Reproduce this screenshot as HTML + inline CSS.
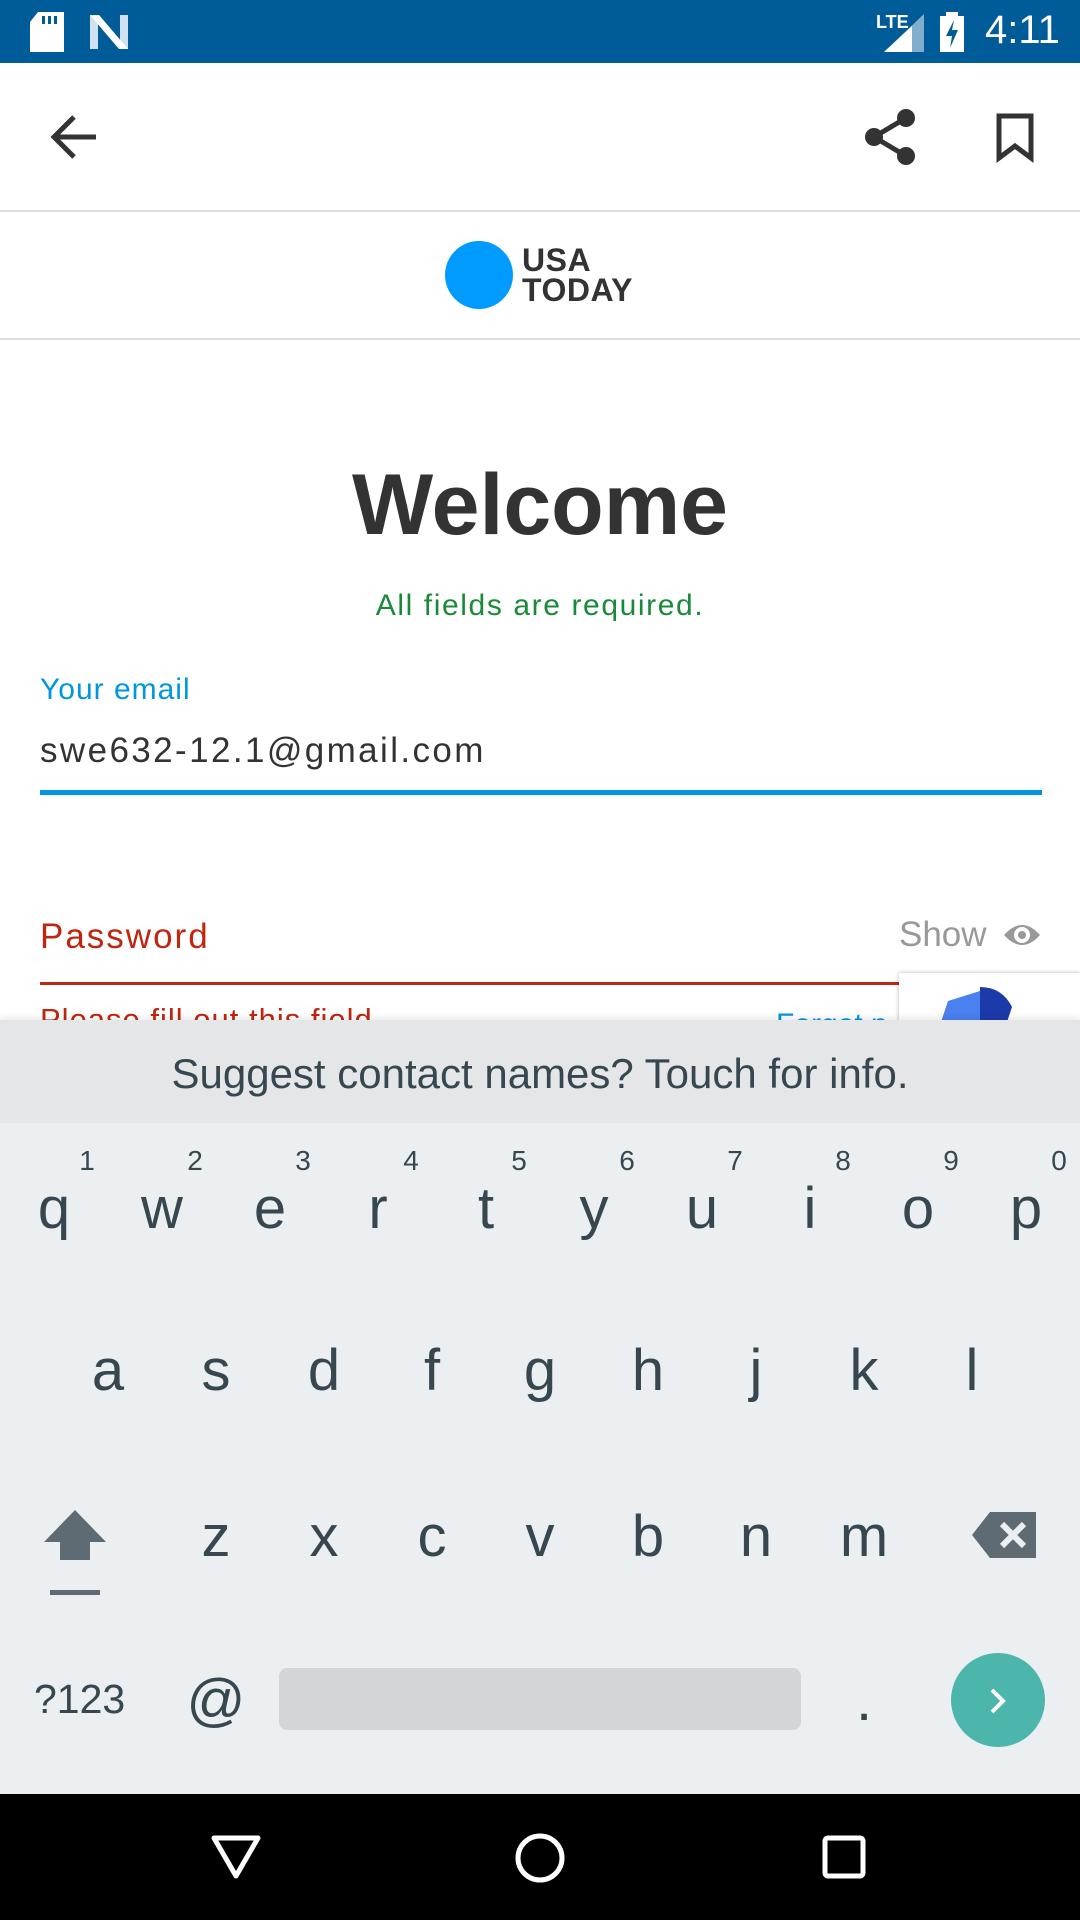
<!DOCTYPE html>
<html><head><meta charset="utf-8"><style>
*{margin:0;padding:0;box-sizing:border-box}
body{width:1080px;height:1920px;position:relative;overflow:hidden;background:#fff;font-family:"Liberation Sans",sans-serif}
.a{position:absolute}
.k{position:absolute;width:108px;text-align:center;font-size:58px;color:#37474f;line-height:1}
.n{position:absolute;width:40px;text-align:center;font-size:28px;color:#37474f}
</style></head><body>
<div class="a" style="left:0;top:0;width:1080px;height:63px;background:#005c99"></div>
<svg class="a" style="left:30px;top:12px" width="34" height="40"><path d="M8 0H34V40H0V10Z" fill="#fff"/><rect x="12" y="4" width="3" height="8" fill="#005c99"/><rect x="18" y="4" width="3" height="8" fill="#005c99"/><rect x="24" y="4" width="3" height="8" fill="#005c99"/></svg>
<svg class="a" style="left:90px;top:15px" width="40" height="34"><path d="M0 0H9L30 26V0H38V34H29L8 8V34H0Z" fill="#cfe2f0"/><path d="M0 0H9L38 34H29Z" fill="#fff"/></svg>
<div class="a" style="left:876px;top:12px;color:#fff;font-size:18px;font-weight:bold">LTE</div>
<svg class="a" style="left:884px;top:14px" width="40" height="38"><path d="M40 0V38H0Z" fill="#fff" opacity=".5"/><path d="M28 12V38H0Z" fill="#fff"/></svg>
<svg class="a" style="left:940px;top:12px" width="24" height="40"><path d="M6 0H18V4H24V40H0V4H6Z" fill="#fff"/><path d="M14 8L6 24H12L10 36L18 18H12Z" fill="#005c99"/></svg>
<div class="a" style="left:985px;top:8px;color:#fff;font-size:40px">4:11</div>
<svg class="a" style="left:48px;top:113px" width="52" height="50"><path d="M48 24H6M26 4L6 24L26 44" stroke="#333" stroke-width="5" fill="none"/></svg>
<svg class="a" style="left:862px;top:108px" width="56" height="58"><circle cx="44" cy="10" r="9" fill="#333"/><circle cx="12" cy="29" r="9" fill="#333"/><circle cx="44" cy="48" r="9" fill="#333"/><path d="M44 10L12 29L44 48" stroke="#333" stroke-width="5" fill="none"/></svg>
<svg class="a" style="left:996px;top:113px" width="40" height="50"><path d="M3 3H35V45L19 33L3 45Z" stroke="#333" stroke-width="5" fill="none"/></svg>
<div class="a" style="left:0;top:210px;width:1080px;height:2px;background:#ddd"></div>
<div class="a" style="left:445px;top:241px;width:68px;height:68px;border-radius:50%;background:#009bff"></div>
<div class="a" style="left:522px;top:245px;font-size:32px;font-weight:bold;color:#333;line-height:30px;letter-spacing:0.5px">USA<br>TODAY</div>
<div class="a" style="left:0;top:338px;width:1080px;height:2px;background:#ddd"></div>
<div class="a" style="left:0;top:456px;width:1080px;text-align:center;font-size:86px;font-weight:bold;color:#333">Welcome</div>
<div class="a" style="left:0;top:589px;width:1080px;text-align:center;font-size:30px;letter-spacing:1.6px;color:#1a8a3a">All fields are required.</div>
<div class="a" style="left:40px;top:673px;font-size:30px;letter-spacing:1px;color:#0096e0">Your email</div>
<div class="a" style="left:40px;top:731px;font-size:35px;letter-spacing:2.4px;color:#333">swe632-12.1@gmail.com</div>
<div class="a" style="left:40px;top:790px;width:1002px;height:5px;background:#0096e0"></div>
<div class="a" style="left:40px;top:917px;font-size:35px;letter-spacing:2px;color:#c0260f">Password</div>
<div class="a" style="left:899px;top:915px;font-size:35px;color:#999">Show</div>
<svg class="a" style="left:1002px;top:921px" width="40" height="28"><path d="M2 14Q20 -6 38 14Q20 34 2 14Z" fill="#999"/><circle cx="20" cy="14" r="8" fill="#fff"/><circle cx="20" cy="14" r="4" fill="#999"/></svg>
<div class="a" style="left:40px;top:982px;width:860px;height:3px;background:#c0260f"></div>
<div class="a" style="left:40px;top:1002px;font-size:31px;letter-spacing:1px;color:#c0260f;height:18px;overflow:hidden">Please fill out this field</div>
<div class="a" style="left:776px;top:1008px;font-size:30px;color:#0096e0;height:12px;overflow:hidden">Forgot p</div>
<div class="a" style="left:899px;top:973px;width:181px;height:60px;background:#fff;box-shadow:0 0 4px rgba(0,0,0,.3)"></div>
<svg class="a" style="left:940px;top:985px" width="100" height="40"><path d="M8 16L40 6V40H0Z" fill="#4a80f0"/><path d="M40 2Q62 2 72 22L66 40H40Z" fill="#1c3aa9"/></svg>
<div class="a" style="left:0;top:1020px;width:1080px;height:103px;background:#e4e6e8;box-shadow:0 -3px 6px rgba(0,0,0,.08)"></div>
<div class="a" style="left:0;top:1050px;width:1080px;text-align:center;font-size:42px;color:#37474f">Suggest contact names? Touch for info.</div>
<div class="a" style="left:0;top:1123px;width:1080px;height:671px;background:#eceff1"></div>
<div class="n" style="left:67px;top:1145px">1</div><div class="n" style="left:175px;top:1145px">2</div><div class="n" style="left:283px;top:1145px">3</div><div class="n" style="left:391px;top:1145px">4</div><div class="n" style="left:499px;top:1145px">5</div><div class="n" style="left:607px;top:1145px">6</div><div class="n" style="left:715px;top:1145px">7</div><div class="n" style="left:823px;top:1145px">8</div><div class="n" style="left:931px;top:1145px">9</div><div class="n" style="left:1039px;top:1145px">0</div>
<div class="k" style="left:0;top:1180px">q</div><div class="k" style="left:108px;top:1180px">w</div><div class="k" style="left:216px;top:1180px">e</div><div class="k" style="left:324px;top:1180px">r</div><div class="k" style="left:432px;top:1180px">t</div><div class="k" style="left:540px;top:1180px">y</div><div class="k" style="left:648px;top:1180px">u</div><div class="k" style="left:756px;top:1180px">i</div><div class="k" style="left:864px;top:1180px">o</div><div class="k" style="left:972px;top:1180px">p</div>
<div class="k" style="left:54px;top:1342px">a</div><div class="k" style="left:162px;top:1342px">s</div><div class="k" style="left:270px;top:1342px">d</div><div class="k" style="left:378px;top:1342px">f</div><div class="k" style="left:486px;top:1342px">g</div><div class="k" style="left:594px;top:1342px">h</div><div class="k" style="left:702px;top:1342px">j</div><div class="k" style="left:810px;top:1342px">k</div><div class="k" style="left:918px;top:1342px">l</div>
<svg class="a" style="left:44px;top:1510px" width="62" height="86"><path d="M31 0L62 32H46V50H16V32H0Z" fill="#5f6b72"/><rect x="6" y="80" width="50" height="5" fill="#5f6b72"/></svg>
<div class="k" style="left:162px;top:1508px">z</div><div class="k" style="left:270px;top:1508px">x</div><div class="k" style="left:378px;top:1508px">c</div><div class="k" style="left:486px;top:1508px">v</div><div class="k" style="left:594px;top:1508px">b</div><div class="k" style="left:702px;top:1508px">n</div><div class="k" style="left:810px;top:1508px">m</div>
<svg class="a" style="left:972px;top:1512px" width="64" height="46"><path d="M18 0H64V46H18L0 23Z" fill="#5f6b72"/><path d="M30 12L52 34M52 12L30 34" stroke="#eceff1" stroke-width="6"/></svg>
<div class="a" style="left:34px;top:1676px;font-size:41px;color:#37474f">?123</div>
<div class="k" style="left:162px;top:1672px">@</div>
<div class="a" style="left:279px;top:1668px;width:522px;height:62px;border-radius:8px;background:#d2d6d9"></div>
<div class="k" style="left:810px;top:1672px">.</div>
<div class="a" style="left:951px;top:1653px;width:94px;height:94px;border-radius:50%;background:#4db6ac"></div>
<svg class="a" style="left:986px;top:1686px" width="24" height="30"><path d="M6 4L17 15L6 26" stroke="#fff" stroke-width="4" fill="none"/></svg>
<div class="a" style="left:0;top:1794px;width:1080px;height:126px;background:#000"></div>
<svg class="a" style="left:210px;top:1834px" width="52" height="46"><path d="M4 4H48L26 42Z" stroke="#fff" stroke-width="5" fill="none" stroke-linejoin="round"/></svg>
<svg class="a" style="left:514px;top:1832px" width="52" height="52"><circle cx="26" cy="26" r="22" stroke="#fff" stroke-width="5" fill="none"/></svg>
<svg class="a" style="left:822px;top:1835px" width="44" height="44"><rect x="3" y="3" width="38" height="38" rx="3" stroke="#fff" stroke-width="5" fill="none"/></svg>
</body></html>
